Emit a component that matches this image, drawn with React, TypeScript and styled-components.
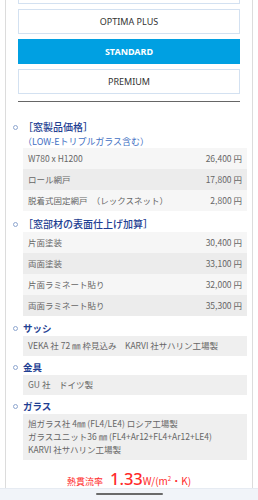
import React from 'react';
import styled, { createGlobalStyle } from 'styled-components';

const GlobalStyle = createGlobalStyle`
  html, body {
    margin: 0;
    padding: 0;
    background: #ffffff;
  }
  body {
    font-family: "Noto Sans CJK JP", "Noto Sans", sans-serif;
  }
`;

const Screen = styled.div`
  display: flex;
  flex-direction: column;
  height: 100vh;
  overflow: hidden;
`;

const Card = styled.div`
  flex: 1;
  min-height: 0;
  margin: 0 5px;
  border-left: 1px solid #dcdcdc;
  border-right: 1px solid #dcdcdc;
`;

const Scroller = styled.div`
  margin-top: -21px;
`;

const GradeList = styled.div`
  display: flex;
  flex-direction: column;
  gap: 5px;
  padding: 0 12px;
`;

const GradeButton = styled.button<{ $active?: boolean }>`
  height: 25px;
  border: 1px solid ${({ $active }) => ($active ? '#00a0e2' : '#d3e1f1')};
  background: ${({ $active }) => ($active ? '#00a0e2' : '#ffffff')};
  color: ${({ $active }) => ($active ? '#ffffff' : '#333333')};
  font-family: "Noto Sans", sans-serif;
  font-size: 9px;
  font-weight: ${({ $active }) => ($active ? 700 : 400)};
  padding: 0;
`;

const Divider = styled.hr`
  margin: 7px 12px 0;
  border: none;
  border-top: 1px solid #666666;
`;

const Sections = styled.ul`
  list-style: none;
  margin: 18px 0 0;
  padding: 0 5px 0 17px;
`;

const Section = styled.li<{ $gap?: number }>`
  position: relative;
  margin-bottom: ${({ $gap }) => $gap ?? 4}px;

  &::before {
    content: '';
    position: absolute;
    left: -10px;
    top: 5px;
    width: 3px;
    height: 3px;
    border: 1px solid #8ea6cf;
    border-radius: 50%;
  }
`;

const Title = styled.div<{ $bold?: boolean }>`
  color: #1f3f93;
  font-size: ${({ $bold }) => ($bold ? '9.5px' : '10px')};
  font-weight: ${({ $bold }) => ($bold ? 700 : 500)};
  line-height: 14px;
  margin-bottom: 1px;
`;

const Subtitle = styled.div`
  color: #3f6fc3;
  font-size: 9px;
  line-height: 13px;
`;

const PriceTable = styled.div`
  display: flex;
  flex-direction: column;
`;

const PriceRow = styled.div`
  display: flex;
  justify-content: space-between;
  align-items: center;
  height: 21px;
  padding: 0 5px;
  background: #f6f6f6;
  color: #666666;
  font-size: 8.5px;
  line-height: 13px;

  &:nth-child(even) {
    background: #ececec;
  }
`;

const InfoBox = styled.div`
  display: flex;
  flex-direction: column;
  justify-content: center;
  background: #efefef;
  color: #666666;
  font-size: 8.5px;
  padding: 3px 5px 4px;
  min-height: 13px;
`;

const InfoLine = styled.div`
  height: 13px;
  line-height: 13px;
  white-space: nowrap;
`;

const HeatLine = styled.div`
  display: flex;
  justify-content: center;
  align-items: baseline;
  margin-top: 9px;
  color: #ff2a2a;
  line-height: 20px;
`;

const HeatLabel = styled.span`
  font-size: 9px;
  margin-right: 7px;
`;

const HeatValue = styled.span`
  font-family: "Noto Sans", sans-serif;
  font-size: 16.5px;
  font-weight: 500;
`;

const HeatUnit = styled.span`
  font-size: 10px;

  sup {
    font-size: 6px;
    line-height: 0;
  }
`;

const GestureBar = styled.div`
  height: 12px;
  flex-shrink: 0;
  background: #f1f4f9;
  border-top: 1px solid #e6ebf2;
  display: flex;
  justify-content: center;
  padding-top: 4px;
  box-sizing: border-box;
`;

const Handle = styled.div`
  width: 67px;
  height: 2px;
  border-radius: 1px;
  background: #6a6a6a;
`;

const grades = [
  { name: 'OPTIMA', active: false },
  { name: 'OPTIMA PLUS', active: false },
  { name: 'STANDARD', active: true },
  { name: 'PREMIUM', active: false },
];

const windowPrices = [
  ['W780 x H1200', '26,400 円'],
  ['ロール網戸', '17,800 円'],
  ['脱着式固定網戸　（レックスネット）', '2,800 円'],
];

const finishPrices = [
  ['片面塗装', '30,400 円'],
  ['両面塗装', '33,100 円'],
  ['片面ラミネート貼り', '32,000 円'],
  ['両面ラミネート貼り', '35,300 円'],
];

const App: React.FC = () => {
  return (
    <Screen>
      <GlobalStyle />
      <Card>
        <Scroller>
          <GradeList>
            {grades.map((g) => (
              <GradeButton key={g.name} $active={g.active}>
                {g.name}
              </GradeButton>
            ))}
          </GradeList>
          <Divider />

          <Sections>
            <Section $gap={6}>
              <Title>［窓製品価格］</Title>
              <Subtitle>（LOW-Eトリプルガラス含む）</Subtitle>
              <PriceTable>
                {windowPrices.map(([label, price]) => (
                  <PriceRow key={label}>
                    <span>{label}</span>
                    <span>{price}</span>
                  </PriceRow>
                ))}
              </PriceTable>
            </Section>

            <Section $gap={5}>
              <Title>［窓部材の表面仕上げ加算］</Title>
              <PriceTable>
                {finishPrices.map(([label, price]) => (
                  <PriceRow key={label}>
                    <span>{label}</span>
                    <span>{price}</span>
                  </PriceRow>
                ))}
              </PriceTable>
            </Section>

            <Section>
              <Title $bold>サッシ</Title>
              <InfoBox>
                <InfoLine>VEKA 社 72 ㎜ 枠見込み　KARVI 社サハリン工場製</InfoLine>
              </InfoBox>
            </Section>

            <Section>
              <Title $bold>金具</Title>
              <InfoBox>
                <InfoLine>GU 社　ドイツ製</InfoLine>
              </InfoBox>
            </Section>

            <Section $gap={0}>
              <Title $bold>ガラス</Title>
              <InfoBox>
                <InfoLine>旭ガラス社 4㎜ (FL4/LE4) ロシア工場製</InfoLine>
                <InfoLine>ガラスユニット36 ㎜ (FL4+Ar12+FL4+Ar12+LE4)</InfoLine>
                <InfoLine>KARVI 社サハリン工場製</InfoLine>
              </InfoBox>
            </Section>
          </Sections>

          <HeatLine>
            <HeatLabel>熱貫流率</HeatLabel>
            <HeatValue>1.33</HeatValue>
            <HeatUnit>
              W/(m<sup>2</sup>・K)
            </HeatUnit>
          </HeatLine>
        </Scroller>
      </Card>
      <GestureBar>
        <Handle />
      </GestureBar>
    </Screen>
  );
};

export default App;
